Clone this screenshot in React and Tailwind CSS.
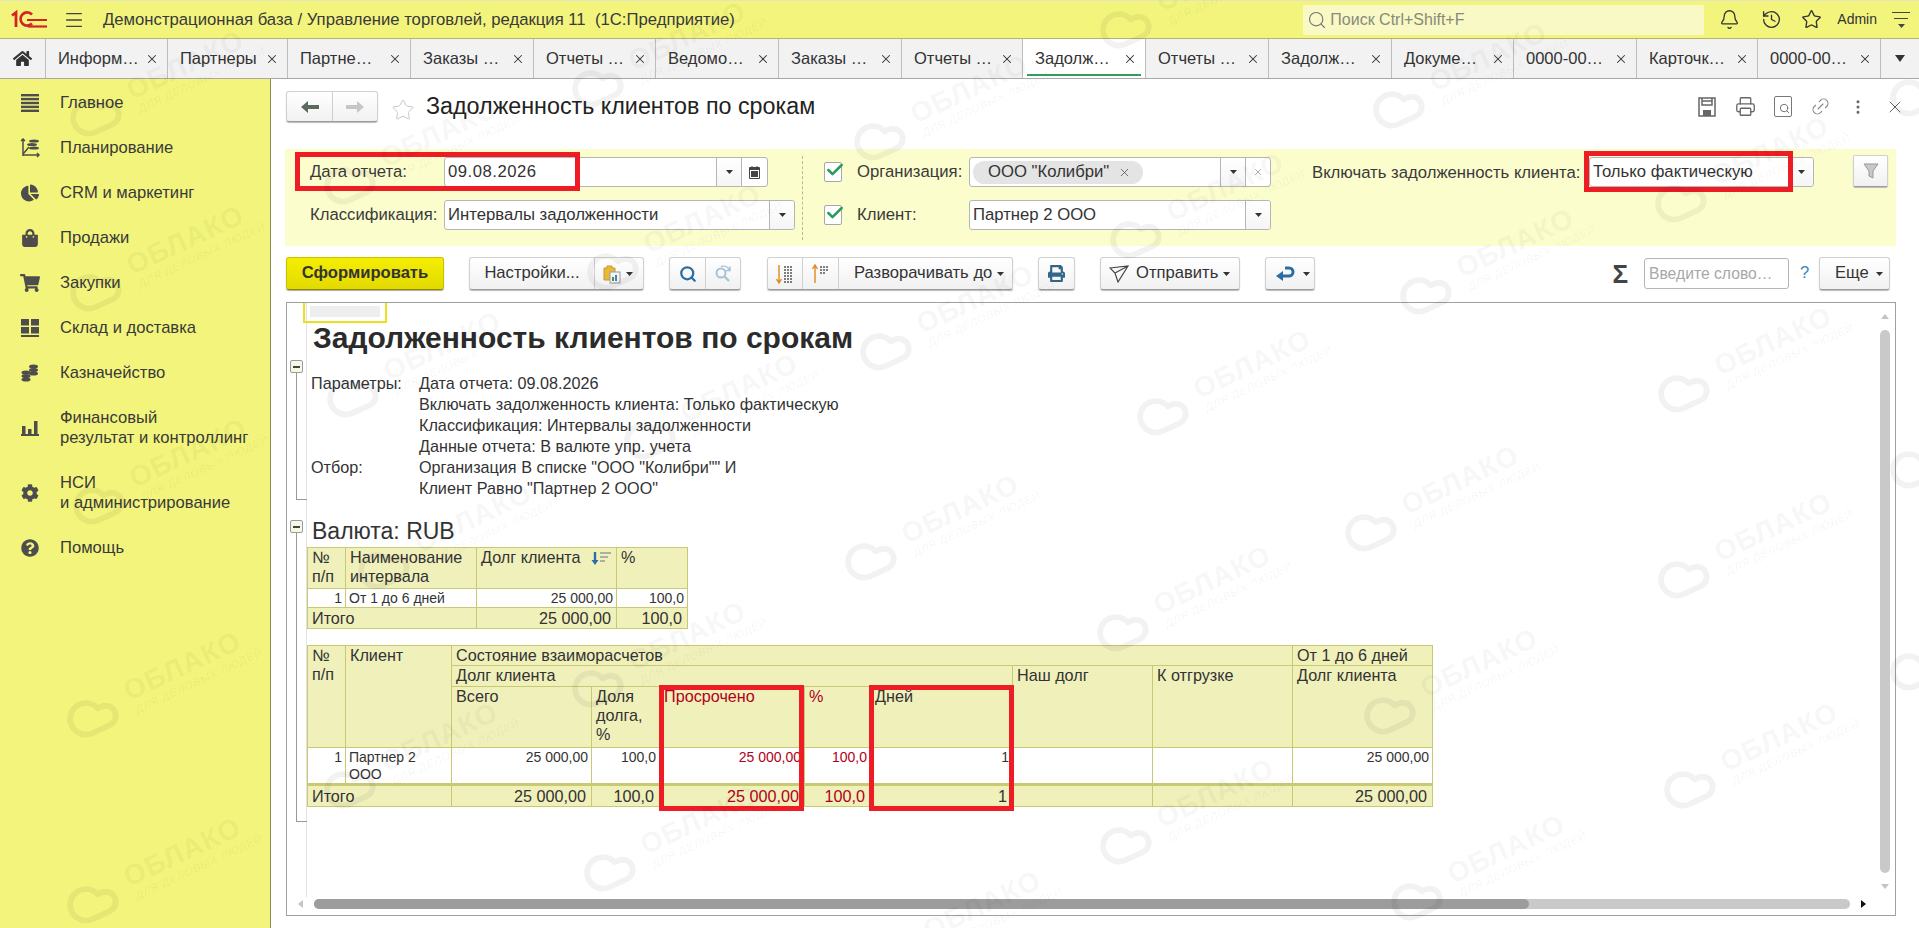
import { Bell, History, Star, Printer, Link2, EllipsisVertical, X, Search, Check, Cloud, Menu } from 'lucide-react';
import { FaHome, FaChartPie, FaShoppingBag, FaShoppingCart, FaCog, FaQuestionCircle, FaPrint } from 'react-icons/fa';

const tabs = [
  { label: 'Информ…', width: 'w-[122px]' },
  { label: 'Партнеры', width: 'w-[120px]' },
  { label: 'Партне…', width: 'w-[123px]' },
  { label: 'Заказы …', width: 'w-[123px]' },
  { label: 'Отчеты …', width: 'w-[122px]' },
  { label: 'Ведомо…', width: 'w-[123px]' },
  { label: 'Заказы …', width: 'w-[123px]' },
  { label: 'Отчеты …', width: 'w-[121px]' },
  { label: 'Задолж…', width: 'w-[123px]', active: true },
  { label: 'Отчеты …', width: 'w-[123px]' },
  { label: 'Задолж…', width: 'w-[123px]' },
  { label: 'Докуме…', width: 'w-[122px]' },
  { label: '0000-00…', width: 'w-[123px]' },
  { label: 'Карточк…', width: 'w-[121px]' },
  { label: '0000-00…', width: 'w-[123px]' },
];

// x, y of the cloud in each watermark
const marks = [
  [95, 115], [349, 183], [597, 86], [95, 290], [612, 269], [352, 396], [649, 438], [98, 503], [383, 568],
  [870, 559], [92, 716], [597, 686], [349, 787], [92, 902], [609, 870], [879, 139], [885, 349], [892, 955],
  [1125, 27], [1398, 107], [1135, 237], [1680, 201], [1425, 293], [1162, 414], [1683, 391], [1370, 530],
  [1122, 630], [1683, 577], [1389, 713], [1125, 843], [1689, 787], [1416, 899], [1915, 95], [1915, 467], [1915, 669],
];

const Caret = ({ className = 'ml-[5px]', color = '#333' }) => (
  <svg width="7" height="4" viewBox="0 0 7 4" className={`shrink-0 ${className}`}>
    <path d="M0 0h7L3.5 4z" fill={color} />
  </svg>
);

const Logo = () => (
  <svg width="36" height="20" viewBox="0 0 36 20" className="shrink-0" fill="none" stroke="#d2232a">
    <path d="M1 5.5 5 2.5V17" strokeWidth="2.8" />
    <path d="M22 5A6.6 6.6 0 1 0 22 14" strokeWidth="2.6" transform="translate(-1 -0.5)" />
    <path d="M17 16.5h19" strokeWidth="2.2" />
    <path d="M16 10h20" strokeWidth="2" />
  </svg>
);

const SaveIcon = () => (
  <svg width="20" height="20" viewBox="0 0 20 20" fill="none" stroke="#666" strokeWidth="1.5">
    <path d="M2 1h16v18H2z" />
    <path d="M5 1v7h10V1M5 4h10" />
    <rect x="6" y="13" width="8" height="6" fill="#666" stroke="none" />
  </svg>
);

const RefindIcon = () => (
  <svg width="18" height="18" viewBox="0 0 18 18" fill="none" stroke="#a9c3d6">
    <circle cx="7" cy="8" r="4.5" strokeWidth="2" />
    <path d="M10.5 11.5 15 16" strokeWidth="2.4" />
    <path d="M7 1.5c3.5-1 7 .5 8.5 3.5M16 1.5V5.5H12" strokeWidth="1.5" />
  </svg>
);

const PlanIcon = () => (
  <svg width="20" height="20" viewBox="0 0 20 20" fill="none" stroke="#4d4d4d">
    <path d="M3 1v17M1 3l2-2 2 2M3 17h16M17 15l2 2-2 2M3 16l6-7" strokeWidth="1.5" />
    <ellipse cx="14" cy="3" rx="5" ry="1.6" fill="#4d4d4d" stroke="none" />
    <ellipse cx="12" cy="6.5" rx="5" ry="1.6" fill="#4d4d4d" stroke="none" />
    <ellipse cx="14" cy="10" rx="5" ry="1.6" fill="#4d4d4d" stroke="none" />
  </svg>
);

const LinesIcon = () => (
  <svg width="18" height="18" viewBox="0 0 18 18" fill="#4d4d4d">
    <rect y="0" width="18" height="2.4" />
    <rect y="3.9" width="18" height="2.4" />
    <rect y="7.8" width="18" height="2.4" />
    <rect y="11.7" width="18" height="2.4" />
    <rect y="15.6" width="18" height="2.4" />
  </svg>
);

const WarehouseIcon = () => (
  <svg width="18" height="18" viewBox="0 0 18 18" fill="#4d4d4d">
    <rect width="8" height="6.5" />
    <rect x="10" width="8" height="6.5" />
    <rect y="8" width="8" height="6.5" />
    <rect x="10" y="8" width="8" height="6.5" />
    <rect y="16" width="18" height="2" />
  </svg>
);

const CoinsIcon = () => (
  <svg width="18" height="18" viewBox="0 0 18 18" fill="#4d4d4d">
    <ellipse cx="12.5" cy="2.5" rx="4.5" ry="2" />
    <ellipse cx="12.5" cy="6" rx="4.5" ry="2" />
    <ellipse cx="12.5" cy="9.5" rx="4.5" ry="2" />
    <ellipse cx="5" cy="8.5" rx="4.5" ry="2" />
    <ellipse cx="5" cy="12" rx="4.5" ry="2" />
    <ellipse cx="5" cy="15.5" rx="4.5" ry="2" />
  </svg>
);

const BarsIcon = () => (
  <svg width="18" height="16" viewBox="0 0 18 16" fill="#4d4d4d">
    <rect x="1" y="6" width="3.5" height="8" />
    <rect x="7" y="9" width="3.5" height="5" />
    <rect x="13" y="1" width="3.5" height="13" />
    <rect y="14" width="18" height="2" />
  </svg>
);

const menu = [
  { label: ['Главное'], icon: <LinesIcon /> },
  { label: ['Планирование'], icon: <PlanIcon /> },
  { label: ['CRM и маркетинг'], icon: <FaChartPie size={18} color="#4d4d4d" /> },
  { label: ['Продажи'], icon: <FaShoppingBag size={18} color="#4d4d4d" /> },
  { label: ['Закупки'], icon: <FaShoppingCart size={20} color="#4d4d4d" /> },
  { label: ['Склад и доставка'], icon: <WarehouseIcon /> },
  { label: ['Казначейство'], icon: <CoinsIcon /> },
  { label: ['Финансовый', 'результат и контроллинг'], icon: <BarsIcon /> },
  { label: ['НСИ', 'и администрирование'], icon: <FaCog size={18} color="#4d4d4d" /> },
  { label: ['Помощь'], icon: <FaQuestionCircle size={18} color="#4d4d4d" /> },
];

const Btn = ({ className = '', children }) => (
  <div className={`h-[33px] flex items-center shrink-0 rounded-[3px] border border-[#d0d0d0] border-b-[#9a9a9a] bg-linear-to-b from-white to-[#f1f1f1] shadow-[0_1px_1px_#bbb] ${className}`}>
    {children}
  </div>
);

const Field = ({ className = '', children, tail }) => (
  <div className={`flex items-stretch shrink-0 rounded-[3px] border border-[#b5b5b5] bg-white text-[16.7px] text-[#333] ${className}`}>
    <div className="flex-1 min-w-0 flex items-center pl-[3px] whitespace-nowrap">{children}</div>
    {tail}
  </div>
);

const Drop = () => (
  <div className="w-[25px] flex items-center justify-center border-l border-[#b5b5b5] bg-linear-to-b from-white to-[#f5f5f5] rounded-r-[3px]">
    <Caret className="" />
  </div>
);

const CheckBox = () => (
  <div className="relative w-[18px] h-[20px] shrink-0 rounded-[2px] border border-[#a8a8a8] bg-white">
    <Check size={20} strokeWidth={3} className="absolute -top-[3px] left-0 text-[#2d9a5b]" />
  </div>
);

const Minus = () => (
  <div className="ml-[3px] w-[13px] h-[13px] shrink-0 flex items-center justify-center border border-[#9a9a9a] bg-[#f7f7e4] rounded-[2px]">
    <div className="w-[7px] h-[2px] bg-[#444]" />
  </div>
);

const Watermark = ({ x, y }) => (
  <div className="absolute w-0 h-0 -rotate-[25deg]" style={{ left: x, top: y }}>
    <Cloud size={54} strokeWidth={2.6} className="absolute -left-[27px] -top-[27px] text-black/[0.05]" />
    <div className="absolute left-[40px] -top-[24px] w-[170px] text-[28px] leading-[34px] font-bold tracking-[1px] text-black/[0.05]">ОБЛАКО</div>
    <div className="absolute left-[42px] top-[6px] w-[170px] text-[11px] leading-[14px] tracking-[0.8px] italic text-black/[0.05]">ДЛЯ ДЕЛОВЫХ ЛЮДЕЙ</div>
  </div>
);

const headCell = 'border border-[#c9c972] bg-[#f0f0bb] align-top px-[4px] py-0 text-[16.2px] leading-[19px] font-normal text-left';
const dataCell = 'border border-[#c9c972] bg-white align-top px-[3px] pt-[1px] text-[14px] leading-[17px] text-right';
const dataTextCell = 'border border-[#c9c972] bg-white align-top px-[3px] pt-[1px] text-[14px] leading-[17px] text-left';
const totalCell = 'border border-[#c9c972] border-t-[3px] bg-[#f0f0bb] align-middle px-[5px] text-[16.2px] leading-[18px] text-right';
const totalTextCell = 'border border-[#c9c972] border-t-[3px] bg-[#f0f0bb] align-middle px-[4px] text-[16.2px] leading-[18px] text-left';

const RedBox = ({ className }) => (
  <div className={`absolute border-[5px] border-[#ee1c25] pointer-events-none ${className}`} />
);

const App = () => {
  return (
    <div className="relative w-[1919px] h-[928px] overflow-hidden flex flex-col bg-white text-[#333] font-['Liberation_Sans',Arial,sans-serif]">
      {/* Top bar */}
      <div className="h-[39px] shrink-0 flex items-center border-t border-[#e4e4c0] border-b border-b-[#b4b46e] bg-[#f2f47c]">
        <div className="ml-[11px]"><Logo /></div>
        <Menu size={22} strokeWidth={1.5} className="ml-[16px] text-[#444]" />
        <div className="ml-[18px] text-[16.7px] whitespace-pre text-[#3a3a3a]">Демонстрационная база / Управление торговлей, редакция 11  (1С:Предприятие)</div>
        <div className="ml-auto w-[401px] h-[30px] flex items-center rounded-[2px] bg-[#f8f9c4] text-[16px] text-[#8a8a7a]">
          <Search size={20} strokeWidth={1.4} className="ml-[4px] text-[#777]" />
          <span className="ml-[3px]">Поиск Ctrl+Shift+F</span>
        </div>
        <Bell size={21} strokeWidth={1.5} className="ml-[15px] text-[#333]" />
        <History size={21} strokeWidth={1.5} className="ml-[21px] text-[#333]" />
        <Star size={21} strokeWidth={1.5} className="ml-[19px] text-[#333]" />
        <div className="ml-[15px] text-[14px]">Admin</div>
        <div className="ml-[15px] mr-[9px] w-[18px] flex flex-col items-center gap-[5px]">
          <div className="w-[18px] h-[1px] bg-[#444]" />
          <div className="w-[14px] h-[1px] bg-[#444]" />
          <Caret className="" color="#444" />
        </div>
      </div>

      {/* Tabs */}
      <div className="h-[40px] shrink-0 flex border-b border-[#a8a8a8] bg-[#f2f2f2] text-[16.5px]">
        <div className="w-[46px] shrink-0 flex items-center justify-center border-r border-[#bdbdbd]">
          <FaHome size={19} color="#333" />
        </div>
        {tabs.map((tab, i) => (
          <div key={i} className={`relative shrink-0 flex items-center justify-between pl-[12px] pr-[8px] border-r border-[#bdbdbd] ${tab.width} ${tab.active ? 'bg-white' : ''}`}>
            <span className="whitespace-nowrap">{tab.label}</span>
            <X size={14} strokeWidth={1.8} className="text-[#333]" />
            {tab.active && <div className="absolute left-[4px] right-[4px] bottom-[2px] h-[2px] bg-[#2f9e5f]" />}
          </div>
        ))}
        <div className="flex-1 flex items-center justify-center">
          <svg width="10" height="7" viewBox="0 0 10 7"><path d="M0 0h10L5 7z" fill="#333" /></svg>
        </div>
      </div>

      <div className="flex-1 min-h-0 flex">
        {/* Sidebar */}
        <div className="w-[271px] shrink-0 pt-[1px] border-r border-[#8c8c50] bg-[#f2f47c] text-[16.6px] text-[#3a3a3a]">
          {menu.map((item) => (
            <div key={item.label[0]} className="flex items-center py-[12.5px] leading-[20px]">
              <div className="w-[60px] flex justify-center">{item.icon}</div>
              <div>
                {item.label.map((line) => <div key={line} className="whitespace-nowrap">{line}</div>)}
              </div>
            </div>
          ))}
        </div>

        {/* Form */}
        <div className="flex-1 min-w-0 flex flex-col">
          <div className="h-[70px] shrink-0 flex items-start pl-[15px] pt-[12px]">
            <div className="w-[92px] h-[31px] flex rounded-[3px] border border-[#d0d0d0] border-b-[#9a9a9a] bg-linear-to-b from-white to-[#f1f1f1] shadow-[0_1px_1px_#bbb]">
              <div className="w-[46px] flex items-center justify-center border-r border-[#cfcfcf]">
                <svg width="18" height="12" viewBox="0 0 18 12" fill="#5a6a5e"><path d="M0 6 7 0v4h11v4H7v4z" /></svg>
              </div>
              <div className="flex-1 flex items-center justify-center">
                <svg width="18" height="12" viewBox="0 0 18 12" fill="#c4c8c4"><path d="M18 6 11 0v4H0v4h11v4z" /></svg>
              </div>
            </div>
            <Star size={24} strokeWidth={1} className="ml-[13px] mt-[7px] text-[#c8c8c8]" />
            <div className="ml-[11px] mt-[1px] text-[23.3px] leading-[28px] text-[#222]">Задолженность клиентов по срокам</div>
            <div className="ml-auto mt-[5px] mr-[14px] flex items-center gap-[18px] text-[#666]">
              <SaveIcon />
              <Printer size={21} strokeWidth={1.5} />
              <div className="relative w-[18px] h-[21px] rounded-[2px] border border-[#777]">
                <Search size={11} strokeWidth={2} className="absolute right-[1px] bottom-[2px]" />
              </div>
              <Link2 size={21} strokeWidth={1.3} className="-rotate-45 text-[#888]" />
              <EllipsisVertical size={18} strokeWidth={2} />
              <X size={20} strokeWidth={1.2} />
            </div>
          </div>

          {/* Filters */}
          <div className="relative ml-[14px] w-[1611px] h-[97px] shrink-0 flex bg-[#fbfdcd] text-[16.7px] text-[#3a3a3a]">
            <div className="w-[517px] shrink-0 pt-[8px] pl-[25px] flex flex-col gap-[13px]">
              <div className="flex items-center">
                <div className="w-[134px]">Дата отчета:</div>
                <Field
                  className="w-[324px] h-[30px]"
                  tail={
                    <>
                      <Drop />
                      <div className="w-[26px] flex items-center justify-center border-l border-[#b5b5b5]">
                        <svg width="11" height="13" viewBox="0 0 11 13" fill="#444"><path d="M1 1h1.5V0h1v1h4V0h1v1H10a1 1 0 0 1 1 1v10a1 1 0 0 1-1 1H1a1 1 0 0 1-1-1V2a1 1 0 0 1 1-1zm0 3v8h9V4z" /><path d="M2 5h7v6H2z" /></svg>
                      </div>
                    </>
                  }
                >
                  <span className="tracking-[0.5px]">09.08.2026</span>
                </Field>
              </div>
              <div className="flex items-center">
                <div className="w-[134px]">Классификация:</div>
                <Field className="w-[351px] h-[30px]" tail={<Drop />}>Интервалы задолженности</Field>
              </div>
            </div>
            <div className="w-0 h-[84px] mt-[7px] shrink-0 border-l border-dashed border-[#b9b99a]" />
            <div className="w-[511px] shrink-0 pt-[8px] pl-[21px] flex flex-col gap-[13px]">
              <div className="flex items-center">
                <CheckBox />
                <div className="ml-[15px] w-[112px]">Организация:</div>
                <Field
                  className="w-[302px] h-[30px]"
                  tail={
                    <>
                      <Drop />
                      <div className="w-[25px] flex items-center justify-center border-l border-[#b5b5b5]">
                        <X size={10} strokeWidth={2} className="text-[#999]" />
                      </div>
                    </>
                  }
                >
                  <div className="h-[23px] w-[170px] flex items-center rounded-full bg-[#e4e4e4] pl-[15px]">
                    ООО "Колибри"
                    <X size={13} strokeWidth={1.5} className="ml-[9px] text-[#555]" />
                  </div>
                </Field>
              </div>
              <div className="flex items-center">
                <CheckBox />
                <div className="ml-[15px] w-[112px]">Клиент:</div>
                <Field className="w-[302px] h-[30px]" tail={<Drop />}>Партнер 2 ООО</Field>
              </div>
            </div>
            <div className="-ml-[2px] pt-[8px] flex items-start">
              <div className="mt-[3px] w-[277px] whitespace-nowrap">Включать задолженность клиента:</div>
              <Field className="w-[225px] h-[30px]" tail={<Drop />}>Только фактическую</Field>
              <div className="ml-[39px] -mt-[2px] w-[35px] h-[32px] flex items-center justify-center rounded-[2px] border border-[#d0d0d0] border-b-[#9a9a9a] bg-linear-to-b from-white to-[#f1f1f1] shadow-[0_1px_1px_#bbb]">
                <svg width="16" height="16" viewBox="0 0 16 16" fill="#c8c8c8" stroke="#999"><path d="M1 1h14L10 8v7l-4-2V8z" /></svg>
              </div>
            </div>
            <RedBox className="left-[10px] top-[3px] w-[285px] h-[39px]" />
            <RedBox className="left-[1299px] top-[2px] w-[209px] h-[41px]" />
          </div>

          {/* Toolbar */}
          <div className="mt-[11px] ml-[15px] mr-[29px] h-[33px] shrink-0 flex items-center text-[16.6px] text-[#333]">
            <div className="w-[158px] h-[33px] flex items-center justify-center rounded-[3px] border border-[#c9c000] border-b-[#8f8900] bg-linear-to-b from-[#f5ee00] to-[#e2da00] font-bold shadow-[0_1px_1px_#aaa]">Сформировать</div>
            <Btn className="ml-[25px] w-[175px]">
              <div className="w-[125px] h-full flex items-center justify-center border-r border-[#d0d0d0]">Настройки...</div>
              <svg width="18" height="20" viewBox="0 0 18 20" className="ml-[8px]">
                <path d="M1 4h3V2h5v2h3v12H1z" fill="#e8b83a" stroke="#c79a28" />
                <rect x="7" y="8" width="10" height="11" fill="#f4f4f4" stroke="#999" />
                <rect x="9" y="13" width="2" height="4" fill="#3f8f5f" />
                <rect x="12" y="11" width="2" height="6" fill="#4a7fb5" />
              </svg>
              <Caret />
            </Btn>
            <Btn className="ml-[25px] w-[72px]">
              <div className="w-[36px] h-full flex items-center justify-center border-r border-[#d0d0d0]">
                <Search size={18} strokeWidth={3} className="text-[#2b6ea3]" />
              </div>
              <div className="flex-1 flex items-center justify-center">
                <RefindIcon />
              </div>
            </Btn>
            <Btn className="ml-[26px] w-[246px]">
              <div className="w-[35px] h-full flex items-center justify-center border-r border-[#d0d0d0]">
                <svg width="18" height="20" viewBox="0 0 18 20" fill="none">
                  <path d="M3 1v17M0.5 15 3 19l2.5-4" stroke="#e08a1e" strokeWidth="1.4" />
                  <path d="M8 3h9M8 6h9M8 9h9M8 12h9M8 15h9M8 18h9" stroke="#555" strokeWidth="1.4" strokeDasharray="2 1" />
                </svg>
              </div>
              <div className="w-[36px] h-full flex items-center justify-center border-r border-[#d0d0d0]">
                <svg width="18" height="20" viewBox="0 0 18 20" fill="none">
                  <path d="M3 19V2M0.5 5 3 1l2.5 4" stroke="#e08a1e" strokeWidth="1.4" />
                  <path d="M8 3h9M8 6h9M8 9h6" stroke="#555" strokeWidth="1.4" strokeDasharray="2 1" />
                </svg>
              </div>
              <div className="pl-[15px] whitespace-nowrap">Разворачивать до</div>
              <Caret />
            </Btn>
            <Btn className="ml-[25px] w-[37px] justify-center"><FaPrint size={17} color="#33658a" /></Btn>
            <Btn className="ml-[25px] w-[140px]">
              <svg width="20" height="18" viewBox="0 0 20 18" fill="none" stroke="#444" strokeWidth="1.2" className="ml-[8px]"><path d="M1 3 19 1 9 17 6 8zM6 8l13-7" /></svg>
              <span className="ml-[7px]">Отправить</span>
              <Caret />
            </Btn>
            <Btn className="ml-[25px] w-[50px]">
              <svg width="20" height="16" viewBox="0 0 20 16" fill="none" className="ml-[9px]"><path d="M10 2h4a3.5 3.5 0 0 1 0 8H6" stroke="#2b6ea3" strokeWidth="3" /><path d="M8 5 1 10l7 5z" fill="#2b6ea3" /></svg>
              <Caret className="ml-[8px]" />
            </Btn>
            <div className="ml-auto text-[26px] leading-[30px] font-bold text-[#444]">Σ</div>
            <div className="ml-[16px] w-[145px] h-[31px] flex items-center rounded-[3px] border border-[#b5b5b5] bg-white pl-[4px] text-[15.7px] text-[#a8a8a8]">Введите слово…</div>
            <div className="ml-[11px] w-[10px] text-[#3a84c0]">?</div>
            <Btn className="ml-[9px] w-[71px]">
              <span className="ml-[15px]">Еще</span>
              <Caret className="ml-[7px]" />
            </Btn>
          </div>

          {/* Report */}
          <div className="mt-[12px] ml-[15px] w-[1610px] h-[614px] shrink-0 flex flex-col border border-[#a0a0a0] text-[16.2px] text-[#333]">
            <div className="flex-1 min-h-0 flex">
              <div className="w-[20px] shrink-0 border-r border-[#e2e2e2] pt-[57px]">
                <Minus />
                <div className="ml-[9px] w-[11px] h-[127px] border-l border-b border-[#9a9a9a]" />
                <div className="h-[20px]" />
                <Minus />
                <div className="ml-[9px] w-[11px] h-[289px] border-l border-b border-[#9a9a9a]" />
              </div>
              <div className="flex-1 min-w-0">
                <div className="-ml-[4px] w-[84px] h-[20px] border-2 border-t-0 border-[#e8e020] px-[5px] pt-[3px]">
                  <div className="h-[11px] bg-[#eeeeee]" />
                </div>
                <div className="-mt-[1px] pl-[6px] h-[32px] text-[30px] leading-[32px] font-bold text-[#2b2b2b] whitespace-nowrap">Задолженность клиентов по срокам</div>
                <div className="mt-[19px] pl-[4px] grid grid-cols-[108px_1fr] leading-[21px]">
                  <div>Параметры:</div><div>Дата отчета: 09.08.2026</div>
                  <div /><div>Включать задолженность клиента: Только фактическую</div>
                  <div /><div>Классификация: Интервалы задолженности</div>
                  <div /><div>Данные отчета: В валюте упр. учета</div>
                  <div>Отбор:</div><div>Организация В списке "ООО "Колибри"" И</div>
                  <div /><div>Клиент Равно "Партнер 2 ООО"</div>
                </div>
                <div className="mt-[18px] mb-[2px] pl-[5px] h-[28px] text-[23px] leading-[28px]">Валюта: RUB</div>

                <table className="table-fixed border-collapse w-[380px]">
                  <colgroup>
                    <col className="w-[38px]" /><col className="w-[131px]" /><col className="w-[140px]" /><col className="w-[71px]" />
                  </colgroup>
                  <tbody>
                    <tr className="h-[41px]">
                      <th className={headCell}>№<br />п/п</th>
                      <th className={headCell}>Наименование<br />интервала</th>
                      <th className={headCell}>
                        <div className="flex items-center justify-between pr-[1px]">
                          Долг клиента
                          <svg width="20" height="14" viewBox="0 0 20 14" fill="none">
                            <path d="M4 1v10" stroke="#2b6ea3" strokeWidth="2.4" /><path d="M0.5 9h7L4 14z" fill="#2b6ea3" />
                            <path d="M9 2h11M9 6h8M9 10h5" stroke="#999" strokeWidth="1.4" />
                          </svg>
                        </div>
                      </th>
                      <th className={headCell}>%</th>
                    </tr>
                    <tr className="h-[19px]">
                      <td className={dataCell}>1</td>
                      <td className={dataTextCell}>От 1 до 6 дней</td>
                      <td className={dataCell}>25 000,00</td>
                      <td className={dataCell}>100,0</td>
                    </tr>
                    <tr className="h-[21px]">
                      <td colSpan={2} className="border border-[#c9c972] bg-[#f0f0bb] px-[4px] text-[16.2px] leading-[18px]">Итого</td>
                      <td className="border border-[#c9c972] bg-[#f0f0bb] px-[5px] text-[16.2px] leading-[18px] text-right">25 000,00</td>
                      <td className="border border-[#c9c972] bg-[#f0f0bb] px-[5px] text-[16.2px] leading-[18px] text-right">100,0</td>
                    </tr>
                  </tbody>
                </table>

                <div className="relative mt-[16px] w-[1125px]">
                  <table className="table-fixed border-collapse w-[1125px]">
                    <colgroup>
                      <col className="w-[38px]" /><col className="w-[106px]" /><col className="w-[140px]" /><col className="w-[68px]" />
                      <col className="w-[145px]" /><col className="w-[66px]" /><col className="w-[142px]" /><col className="w-[140px]" />
                      <col className="w-[140px]" /><col className="w-[140px]" />
                    </colgroup>
                    <tbody>
                      <tr className="h-[20px]">
                        <th rowSpan={3} className={headCell}>№<br />п/п</th>
                        <th rowSpan={3} className={headCell}>Клиент</th>
                        <th colSpan={7} className={headCell}>Состояние взаиморасчетов</th>
                        <th className={headCell}>От 1 до 6 дней</th>
                      </tr>
                      <tr className="h-[21px]">
                        <th colSpan={5} className={headCell}>Долг клиента</th>
                        <th rowSpan={2} className={headCell}>Наш долг</th>
                        <th rowSpan={2} className={headCell}>К отгрузке</th>
                        <th rowSpan={2} className={headCell}>Долг клиента</th>
                      </tr>
                      <tr className="h-[61px]">
                        <th className={headCell}>Всего</th>
                        <th className={headCell}>Доля<br />долга,<br />%</th>
                        <th className={`${headCell} text-[#b00020]`}>Просрочено</th>
                        <th className={`${headCell} text-[#b00020]`}>%</th>
                        <th className={headCell}>Дней</th>
                      </tr>
                      <tr className="h-[36px]">
                        <td className={dataCell}>1</td>
                        <td className={dataTextCell}>Партнер 2<br />ООО</td>
                        <td className={dataCell}>25 000,00</td>
                        <td className={dataCell}>100,0</td>
                        <td className={`${dataCell} text-[#b00020]`}>25 000,00</td>
                        <td className={`${dataCell} text-[#b00020]`}>100,0</td>
                        <td className={dataCell}>1</td>
                        <td className={dataCell} />
                        <td className={dataCell} />
                        <td className={dataCell}>25 000,00</td>
                      </tr>
                      <tr className="h-[22px]">
                        <td colSpan={2} className={totalTextCell}>Итого</td>
                        <td className={totalCell}>25 000,00</td>
                        <td className={totalCell}>100,0</td>
                        <td className={`${totalCell} text-[#b00020]`}>25 000,00</td>
                        <td className={`${totalCell} text-[#b00020]`}>100,0</td>
                        <td className={totalCell}>1</td>
                        <td className={totalCell} />
                        <td className={totalCell} />
                        <td className={totalCell}>25 000,00</td>
                      </tr>
                    </tbody>
                  </table>
                  <RedBox className="left-[352px] top-[40px] w-[145px] h-[126px]" />
                  <RedBox className="left-[562px] top-[40px] w-[145px] h-[126px]" />
                </div>
              </div>
              <div className="w-[16px] shrink-0 flex flex-col items-center pt-[11px] pr-[5px]">
                <svg width="8" height="5" viewBox="0 0 8 5"><path d="M4 0l4 5H0z" fill="#c4c4c4" /></svg>
                <div className="mt-[11px] w-[10px] h-[543px] rounded-full bg-[#c9c9c9]" />
                <svg width="8" height="5" viewBox="0 0 8 5" className="mt-[11px]"><path d="M0 0h8L4 5z" fill="#c4c4c4" /></svg>
              </div>
            </div>
            <div className="h-[18px] shrink-0 flex items-center pb-[4px]">
              <svg width="5" height="8" viewBox="0 0 5 8" className="ml-[11px]"><path d="M0 4l5-4v8z" fill="#c4c4c4" /></svg>
              <div className="ml-[11px] w-[1536px] h-[10px] rounded-full bg-[#c9c9c9]">
                <div className="w-[1215px] h-[10px] rounded-full bg-[#9c9c9c]" />
              </div>
              <svg width="5" height="8" viewBox="0 0 5 8" className="ml-[11px]"><path d="M5 4 0 0v8z" fill="#111" /></svg>
            </div>
          </div>
        </div>
      </div>

      {/* Watermarks lie over everything */}
      <div className="absolute inset-0 pointer-events-none overflow-hidden">
        {marks.map(([x, y], i) => <Watermark key={i} x={x} y={y} />)}
      </div>
    </div>
  );
};

export default App;
